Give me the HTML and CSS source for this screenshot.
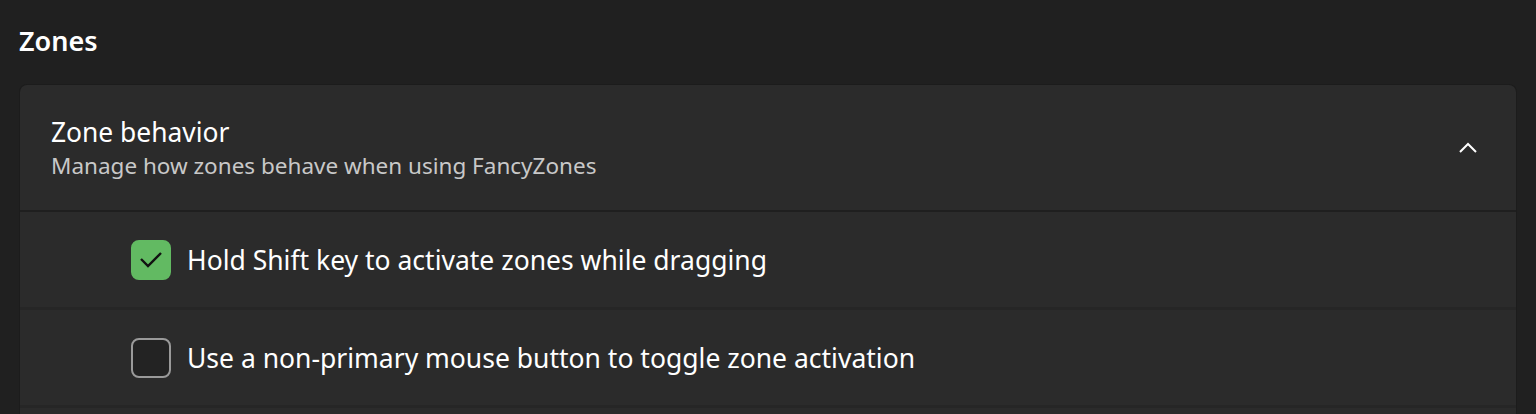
FILE: index.html
```html
<!DOCTYPE html>
<html lang="en">
<head>
<meta charset="utf-8">
<link rel="stylesheet" href="styles.css">
</head>
<body>
<div class="page">
  <h2 class="group-title">Zones</h2>
  <div class="card">
    <div class="card-header">
      <div class="header-text">
        <div class="header-title">Zone behavior</div>
        <div class="header-desc">Manage how zones behave when using FancyZones</div>
      </div>
      <svg class="chevron" width="18" height="11" viewBox="0 0 18 11"><path d="M1 10 L9 2 L17 10" fill="none" stroke="#ffffff" stroke-width="2"/></svg>
    </div>
    <div class="row">
      <span class="check checked"><svg width="24" height="18" viewBox="0 0 24 18"><path d="M2 8 L9 15 L22 2" fill="none" stroke="#111" stroke-width="2.4"/></svg></span>
      <span class="label">Hold Shift key to activate zones while dragging</span>
    </div>
    <div class="row">
      <span class="check"></span>
      <span class="label">Use a non-primary mouse button to toggle zone activation</span>
    </div>
    <div class="row"></div>
  </div>
</div>
</body>
</html>
```
FILE: styles.css
```css
html, body {
  margin: 0;
  padding: 0;
  background: #202020;
  color: #ffffff;
  font-family: "Noto Sans", "Open Sans", sans-serif;
  overflow: hidden;
}
.page {
  padding: 0 19px;
}
.group-title {
  margin: 0;
  padding-top: 22px;
  height: 84px;
  box-sizing: border-box;
  font-size: 27px;
  font-weight: 600;
  line-height: 38px;
}
.card {
  background: #2b2b2b;
  border: 1px solid #1c1c1c;
  border-bottom: none;
  border-radius: 8px 8px 0 0;
}
.card-header {
  height: 125px;
  display: flex;
  align-items: center;
  padding: 0 39px 0 31px;
  border-bottom: 2px solid #1f1f1f;
}
.header-text {
  flex: 1;
  display: flex;
  flex-direction: column;
  padding-top: 2px;
}
.header-title {
  font-size: 26.4px;
  line-height: 34px;
}
.header-desc {
  font-size: 22.5px;
  line-height: 33px;
  color: #c8c8c8;
}
.chevron {
  display: block;
}
.row {
  height: 95px;
  display: flex;
  align-items: center;
  padding-left: 111px;
  border-bottom: 3px solid #262626;
}
.check {
  width: 40px;
  height: 40px;
  box-sizing: border-box;
  border-radius: 8px;
  border: 2px solid #9a9a9a;
  background: #232323;
  display: flex;
  align-items: center;
  justify-content: center;
  flex: none;
}
.check.checked {
  background: #62ba62;
  border-color: #62ba62;
}
.label {
  margin-left: 16px;
  font-size: 26.5px;
}
```
